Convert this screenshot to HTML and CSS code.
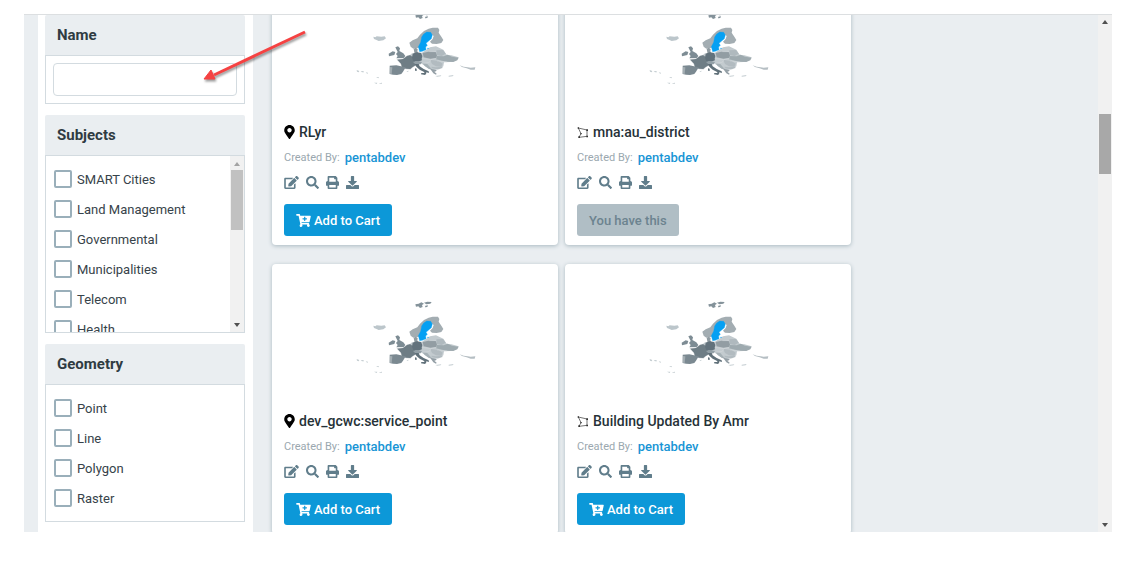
FILE: index.html
```html
<!DOCTYPE html>
<html lang="en">
<head>
<meta charset="utf-8">
<meta name="viewport" content="width=device-width, initial-scale=1">
<title>Layers</title>
<link rel="stylesheet" href="styles.css">
</head>
<body>
<svg class="sprite" aria-hidden="true">
  <symbol id="pin" viewBox="0 0 384 512"><path fill-rule="evenodd" d="M172.268 501.67C26.97 291.031 0 269.413 0 192 0 85.961 85.961 0 192 0s192 85.961 192 192c0 77.413-26.97 99.031-172.268 309.67-9.535 13.774-29.93 13.773-39.464 0zM192 272c44.183 0 80-35.817 80-80s-35.817-80-80-80-80 35.817-80 80 35.817 80 80 80z"/></symbol>
  <symbol id="poly" viewBox="0 0 36 39"><path d="M4 6L30 12V31L6 34L12 23Z" fill="none" stroke="#555" stroke-width="2.5"/><path d="M2 4h4v4H2zM28 10h5v5h-5zM28 29h5v5h-5zM4 31h5v5H4zM10 21h4v4h-4z" fill="#333"/></symbol>
  <symbol id="edit" viewBox="0 0 576 512"><path d="M402.6 83.2l90.2 90.2c3.8 3.8 3.8 10 0 13.8L274.4 405.6l-92.8 10.3c-12.4 1.4-22.9-9.1-21.5-21.5l10.3-92.8L388.8 83.2c3.8-3.8 10-3.8 13.8 0zm162-22.9l-48.8-48.8c-15.2-15.2-39.9-15.2-55.2 0l-35.4 35.4c-3.8 3.8-3.8 10 0 13.8l90.2 90.2c3.8 3.8 10 3.8 13.8 0l35.4-35.4c15.2-15.3 15.2-40 0-55.2zM384 346.2V448H64V128h229.8c3.2 0 6.2-1.3 8.5-3.5l40-40c7.6-7.6 2.2-20.5-8.5-20.5H48C21.5 64 0 85.5 0 112v352c0 26.5 21.5 48 48 48h352c26.5 0 48-21.5 48-48V306.2c0-10.7-12.9-16-20.5-8.5l-40 40c-2.2 2.3-3.5 5.3-3.5 8.5z"/></symbol>
  <symbol id="search" viewBox="0 0 512 512"><path d="M505 442.7L405.3 343c-4.5-4.5-10.6-7-17-7H372c27.6-35.3 44-79.7 44-128C416 93.1 322.9 0 208 0S0 93.1 0 208s93.1 208 208 208c48.3 0 92.7-16.4 128-44v16.3c0 6.4 2.5 12.5 7 17l99.7 99.7c9.4 9.4 24.6 9.4 33.9 0l28.3-28.3c9.4-9.4 9.4-24.6.1-34zM208 336c-70.7 0-128-57.2-128-128 0-70.7 57.2-128 128-128 70.7 0 128 57.2 128 128 0 70.7-57.2 128-128 128z"/></symbol>
  <symbol id="print" viewBox="0 0 512 512"><path fill-rule="evenodd" d="M448 192V77.25c0-8.49-3.37-16.62-9.37-22.63L393.37 9.37c-6-6-14.14-9.37-22.63-9.37H96C78.33 0 64 14.33 64 32v160c-35.35 0-64 28.65-64 64v112c0 8.84 7.16 16 16 16h48v96c0 17.67 14.33 32 32 32h320c17.67 0 32-14.33 32-32v-96h48c8.84 0 16-7.16 16-16V256c0-35.35-28.65-64-64-64zm-64 256H128v-96h256v96zm0-224H128V64h192v48c0 8.84 7.16 16 16 16h48v96z"/></symbol>
  <symbol id="download" viewBox="0 0 512 512"><path d="M216 0h80c13.3 0 24 10.7 24 24v168h87.7c17.8 0 26.7 21.5 14.1 34.1L269.7 378.3c-7.5 7.5-19.8 7.5-27.3 0L90.1 226.1c-12.6-12.6-3.7-34.1 14.1-34.1H192V24c0-13.3 10.7-24 24-24zm296 376v112c0 13.3-10.7 24-24 24H24c-13.3 0-24-10.7-24-24V376c0-13.3 10.7-24 24-24h146.7l49 49c20.1 20.1 52.5 20.1 72.6 0l49-49H488c13.3 0 24 10.7 24 24z"/></symbol>
  <symbol id="cart" viewBox="0 0 576 512"><path fill-rule="evenodd" d="M504.717 320H211.572l6.545 32h268.418c15.401 0 26.816 14.301 23.403 29.319l-5.517 24.276C523.112 414.668 536 433.828 536 456c0 31.202-25.519 56.444-56.824 55.994-29.823-.429-54.35-24.631-55.155-54.447-.44-16.287 6.085-31.049 16.803-41.548H231.176C241.553 426.165 248 440.326 248 456c0 31.813-26.528 57.431-58.67 55.938-28.54-1.325-51.751-24.385-53.251-52.917-1.158-22.034 10.436-41.455 28.051-51.586L93.883 64H24C10.745 64 0 53.255 0 40V24C0 10.745 10.745 0 24 0h102.529c11.401 0 21.228 8.021 23.513 19.19L159.208 64H551.99c15.401 0 26.816 14.301 23.403 29.319l-47.273 208C525.637 312.246 515.923 320 504.717 320zM408 168h-48v-40c0-8.837-7.163-16-16-16h-16c-8.837 0-16 7.163-16 16v40h-48c-8.837 0-16 7.163-16 16v16c0 8.837 7.163 16 16 16h48v40c0 8.837 7.163 16 16 16h16c8.837 0 16-7.163 16-16v-40h48c8.837 0 16-7.163 16-16v-16c0-8.837-7.163-16-16-16z"/></symbol>
  <symbol id="map" viewBox="0 0 450 300">
    <path d="M202 184l14-12 30-2 24-16 18-3 22 10 10 15 14 2 22 6-6 8-18 6-20 1-2 12-12 9-18 2-12-3-14-10-18-12-18 2-14 6z" fill="#c3cbcf"/>
    <path d="M226 58l10-2 8-4 8 4-6 4 2 6-8 3-5-5-7 1zM252 53l10-3 13 1-4 5-12 2zM256 62l8-1-2 5-7 1z" fill="#84929a"/>
    <path d="M100 122l6 2 4-3 14 1 10-1 4 6-8 6-14 2-8-4-6-2z" fill="#bcc6cb"/>
    <path d="M208 140l10-7 14-6 8-11 12-11 14-7 12-3 16 0 4 7-2 8 8 12 6 10-6 9-14 3-14-1-6-6 8-8 3-9-8-7-16 2-6 14-6 14-9 12-16 3-8-6z" fill="#a3adb2"/>
    <path d="M166 154l8-3 6 6-2 8 12 7 6 8-5 6-22 1 4-7-5-6 5-6zM146 173l12-7 8 2-3 9-16 4z" fill="#7d8c94"/>
    <path d="M221 159l6-4 6 4-1 7 3 6-11 2z" fill="#8f9ba1"/>
    <path d="M172 191l17-2 12-9 9-2 11 7 8 4-4 9 3 9-10 6-7 6-13-1-12-5-3-10z" fill="#6e7d85" stroke="#6e7d85" stroke-width="1"/>
    <path d="M149 209l20-1 28 6-7 12-6 8-13 3-12-1-10-2z" fill="#7b8991"/>
    <path d="M150 213l7 1-2 20-6-1z" fill="#a3adb2"/>
    <path d="M218 173l12-4 13 2 4 9-2 8 1 5-12 4-14-2-4-10z" fill="#62727c"/>
    <path d="M219 198l12-3 15 3-4 7-14 1z" fill="#929fa6"/>
    <path d="M224 204l12 0 3 7 12 8 15 7 1 5-8-2-1 7-7-9-12-6-10-9zM244 231l14 0-3 6-12-2zM225 217l5 1 0 7-5-1z" fill="#61717a"/>
    <path d="M248 171l17-4 22 1 4 9-2 9-18 2-20-4z" fill="#929da3"/>
    <path d="M289 163l20-1 8 11-12 7-15-3z" fill="#afb9be"/>
    <path d="M289 180l22 1 12-5 13 6 20 3-4 8-12 5-16-1-18-3-18-4z" fill="#9eaaaf"/>
    <path d="M270 191l26 4 12 8-4 9-16-1-12-7zM274 212l14 2 18-2 2 4-15 4-17-3z" fill="#b2bbc0"/>
    <path d="M248 202l14 2 10 12-4 4-14-10z" fill="#a5b0b5"/>
    <path d="M268 216l10 4 12 2-2 4-5 1 7 6-2 3-8-4-7-10z" fill="#949fa6"/>
    <path d="M359 208l12 4 12 2 9 1 14-1-2 7-12 0-12-4-14-4z" fill="#b5bec3"/>
    <path d="M50 222l8 3-2 4-5-2zM62 226l8-1 2 4-6 0zM77 229l7 1-2 4zM108 244l9-1-2 4zM102 260l10 0-2 4zM116 262l10-2-1 4zM286 240l18-2-2 3-10 1zM326 239l15-2-3 4-12 1zM199 226l7-2-2 4z" fill="#c4cdd1"/>
    <path d="M246 187l26 4 19-5M248 202l20-3 6-10M268 167l20 0M291 195l30 3" fill="none" stroke="#dde2e4" stroke-width="1"/>
    <path d="M235 152l7-13 3-16 6-9 9-6 12 1 5 8-3 11-9 8-7 6 4 6-5 5 1 8-11 5-8 1z" fill="#05a0f3" stroke="#05a0f3" stroke-width="1"/>
    <circle cx="264" cy="157" r="2" fill="#05a0f3"/>
  </symbol>
</svg>

<div class="viewport">
  <aside class="filters">
    <section class="panel">
      <h2><label for="name">Name</label></h2>
      <div class="panel-body search-body"><input class="text" id="name" type="text"></div>
    </section>
    <section class="panel">
      <h2>Subjects</h2>
      <div class="panel-body split">
        <div class="options clipped">
          <label><input type="checkbox">SMART Cities</label>
          <label><input type="checkbox">Land Management</label>
          <label><input type="checkbox">Governmental</label>
          <label><input type="checkbox">Municipalities</label>
          <label><input type="checkbox">Telecom</label>
          <label><input type="checkbox">Health</label>
        </div>
        <div class="bar small" aria-hidden="true"><i class="up"></i><i class="thumb"></i><i class="down"></i></div>
      </div>
    </section>
    <section class="panel">
      <h2>Geometry</h2>
      <div class="panel-body options">
        <label><input type="checkbox">Point</label>
        <label><input type="checkbox">Line</label>
        <label><input type="checkbox">Polygon</label>
        <label><input type="checkbox">Raster</label>
      </div>
    </section>
  </aside>

  <main class="results">
    <article class="card">
      <svg class="map"><use href="#map"/></svg>
      <h3><svg class="pin"><use href="#pin"/></svg>RLyr</h3>
      <p>Created By: <a href="#">pentabdev</a></p>
      <div class="tools">
        <button aria-label="Edit"><svg class="wide"><use href="#edit"/></svg></button>
        <button aria-label="Preview"><svg><use href="#search"/></svg></button>
        <button aria-label="Print"><svg><use href="#print"/></svg></button>
        <button aria-label="Download"><svg><use href="#download"/></svg></button>
      </div>
      <button class="action"><svg><use href="#cart"/></svg>Add to Cart</button>
    </article>
    <article class="card">
      <svg class="map"><use href="#map"/></svg>
      <h3><svg class="poly"><use href="#poly"/></svg>mna:au_district</h3>
      <p>Created By: <a href="#">pentabdev</a></p>
      <div class="tools">
        <button aria-label="Edit"><svg class="wide"><use href="#edit"/></svg></button>
        <button aria-label="Preview"><svg><use href="#search"/></svg></button>
        <button aria-label="Print"><svg><use href="#print"/></svg></button>
        <button aria-label="Download"><svg><use href="#download"/></svg></button>
      </div>
      <button class="action owned" disabled>You have this</button>
    </article>
    <article class="card">
      <svg class="map"><use href="#map"/></svg>
      <h3><svg class="pin"><use href="#pin"/></svg>dev_gcwc:service_point</h3>
      <p>Created By: <a href="#">pentabdev</a></p>
      <div class="tools">
        <button aria-label="Edit"><svg class="wide"><use href="#edit"/></svg></button>
        <button aria-label="Preview"><svg><use href="#search"/></svg></button>
        <button aria-label="Print"><svg><use href="#print"/></svg></button>
        <button aria-label="Download"><svg><use href="#download"/></svg></button>
      </div>
      <button class="action"><svg><use href="#cart"/></svg>Add to Cart</button>
    </article>
    <article class="card">
      <svg class="map"><use href="#map"/></svg>
      <h3><svg class="poly"><use href="#poly"/></svg>Building Updated By Amr</h3>
      <p>Created By: <a href="#">pentabdev</a></p>
      <div class="tools">
        <button aria-label="Edit"><svg class="wide"><use href="#edit"/></svg></button>
        <button aria-label="Preview"><svg><use href="#search"/></svg></button>
        <button aria-label="Print"><svg><use href="#print"/></svg></button>
        <button aria-label="Download"><svg><use href="#download"/></svg></button>
      </div>
      <button class="action"><svg><use href="#cart"/></svg>Add to Cart</button>
    </article>
  </main>

  <div class="bar page-bar" aria-hidden="true"><i class="up"></i><i class="thumb"></i><i class="down"></i></div>

  <svg class="arrow" viewBox="0 0 110 60" aria-hidden="true"><path d="M105 4L14 47" stroke="#f54242" stroke-width="3" stroke-linecap="butt"/><path d="M4 51L11 42L15 51Z" fill="#f54242" stroke="#f54242" stroke-width="1" stroke-linejoin="round"/></svg>
</div>
</body>
</html>
```
FILE: styles.css
```css
* {
  box-sizing: border-box;
}

body {
  margin: 0;
  background: #fff;
  font-family: Roboto, "Liberation Sans", sans-serif;
  color: #37434a;
}

h2,
h3,
p {
  margin: 0;
}

svg {
  display: block;
  fill: currentColor;
}

.sprite {
  position: absolute;
  width: 0;
  height: 0;
}

.viewport {
  position: relative;
  display: flex;
  height: calc(100vh - 43px);
  margin: 14px 19px 29px 24px;
  padding-left: 14px;
  overflow: hidden;
  background: #eaeef1;
  border-top: 1px solid #dcdfe1;
}

.filters {
  display: flex;
  flex: none;
  flex-direction: column;
  gap: 11px;
  width: 215px;
  padding: 0 8px 0 7px;
  background: #fff;
}

.panel h2 {
  padding: 0 12px;
  background: #eaeef1;
  border-radius: 2px 2px 0 0;
  font-size: 15px;
  font-weight: 700;
  line-height: 40px;
  color: #2f3b42;
}

.panel-body {
  border: 1px solid #d3dbe0;
}

.search-body {
  padding: 7px;
}

.text {
  display: block;
  width: 100%;
  height: 33px;
  padding: 0 8px;
  border: 1px solid #d3dbe0;
  border-radius: 4px;
  background: #fff;
  font: inherit;
}

.split {
  display: flex;
}

.options {
  flex: 1;
  padding: 8px;
}

.options.clipped {
  height: 176px;
  overflow: hidden;
}

.options label {
  display: flex;
  align-items: center;
  gap: 5px;
  height: 30px;
  font-size: 13px;
}

.options input {
  appearance: none;
  width: 18px;
  height: 18px;
  margin: 0;
  border: 2px solid #9aafba;
  border-radius: 2px;
  background: #fff;
}

.bar {
  display: flex;
  flex: none;
  flex-direction: column;
  align-items: center;
  width: 14px;
  background: #f1f1f1;
}

.up,
.down {
  width: 0;
  height: 0;
  border: 3px solid transparent;
}

.up {
  border-bottom: 4px solid #505050;
  border-top-width: 0;
}

.down {
  margin: auto 0 5px;
  border-top: 4px solid #505050;
  border-bottom-width: 0;
}

.thumb {
  width: 12px;
  height: 60px;
  background: #c1c1c1;
}

.small .up {
  margin: 6px 0 4px;
  border-bottom-color: #a3a3a3;
}

.page-bar .up {
  margin: 5px 0 90px;
}

.page-bar .thumb {
  background: #a8a8a8;
}

.results {
  display: grid;
  flex: 1;
  grid-template-columns: 286px 286px;
  align-content: start;
  gap: 19px 7px;
  margin-top: -40px;
  padding-left: 19px;
}

.card {
  display: flex;
  flex-direction: column;
  align-items: flex-start;
  padding: 21px 12px 9px;
  background: #fff;
  border-radius: 4px;
  box-shadow: 0 1px 4px #a9b8c0;
}

.map {
  align-self: center;
  width: 150px;
  height: 100px;
}

.card h3 {
  display: flex;
  align-items: center;
  gap: 4px;
  margin-top: 26px;
  font-size: 14px;
  font-weight: 500;
  line-height: 20px;
  color: #263238;
}

.pin {
  width: 11px;
  height: 14px;
  color: #000;
}

.poly {
  width: 12px;
  height: 13px;
}

.card p {
  display: flex;
  align-items: center;
  gap: 5px;
  margin-top: 6px;
  font-size: 11px;
  font-weight: 400;
  line-height: 20px;
  color: #9ba8af;
}

.card a {
  font-size: 13px;
  font-weight: 500;
  color: #1895d5;
  text-decoration: none;
}

.tools {
  display: flex;
  gap: 7px;
  margin-top: 8px;
}

.tools button {
  padding: 0;
  border: 0;
  background: none;
  color: #607d8b;
}

.tools svg {
  width: 13px;
  height: 13px;
}

.tools .wide {
  width: 15px;
}

.action {
  display: flex;
  align-items: center;
  gap: 3px;
  height: 32px;
  margin-top: 15px;
  padding: 0 12px;
  border: 0;
  border-radius: 3px;
  background: #0c98d8;
  font: 500 13px Roboto, "Liberation Sans", sans-serif;
  color: #fff;
}

.action svg {
  width: 15px;
  height: 13px;
}

.action.owned {
  background: #b0bec5;
  color: #6c838f;
}

.arrow {
  position: absolute;
  top: 13px;
  left: 176px;
  width: 110px;
  height: 60px;
  filter: drop-shadow(1px 2px 1px rgb(0 0 0 / 40%));
}
```
